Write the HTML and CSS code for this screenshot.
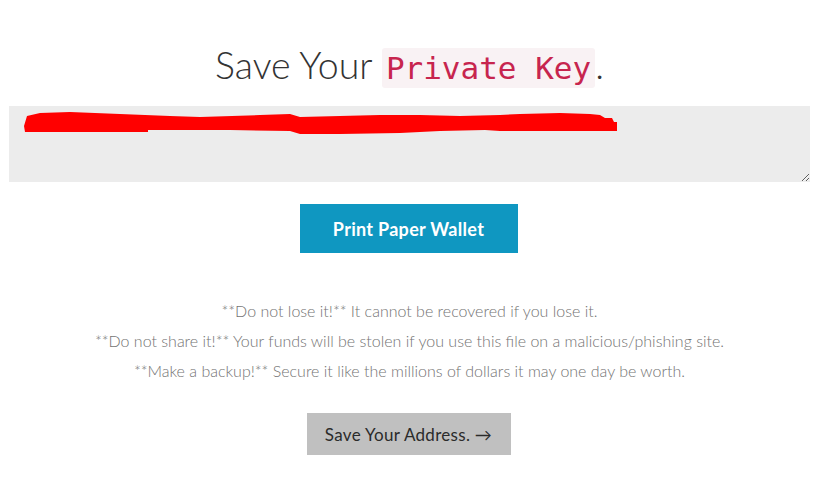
FILE: index.html
```html
<!DOCTYPE html>
<html lang="en">
<head>
<meta charset="utf-8">
<title>Save Your Private Key</title>
<link rel="stylesheet" href="styles.css">
</head>
<body>
<main class="page">
  <h1 class="title">Save Your <code class="key">Private Key</code>.</h1>
  <div class="key-box">
    <textarea class="key-field" readonly aria-label="Private key"></textarea>
    <svg class="redact" width="801" height="76" viewBox="0 0 801 76" aria-hidden="true">
      <path fill="#ff0000" d="M18 10 L31 7 L61 6 L111 8 L161 10 L191 11 L251 9 L281 8 L291 11 L331 10 L371 9 L411 9 L451 10 L491 9 L511 8 L551 7 L581 8 L591 9 L596 12 L603 12 L605 16 L608 16 L608 25 L491 25 L476 24 L431 25 L391 27 L331 28 L291 28 L281 25 L221 24 L191 24 L139 24 L139 26 L16 26 L15 20 Z"/>
    </svg>
  </div>
  <div class="actions actions-print">
    <button class="btn btn-print" type="button">Print Paper Wallet</button>
  </div>
  <div class="notes">
    <p>**Do not lose it!** It cannot be recovered if you lose it.</p>
    <p>**Do not share it!** Your funds will be stolen if you use this file on a malicious/phishing site.</p>
    <p>**Make a backup!** Secure it like the millions of dollars it may one day be worth.</p>
  </div>
  <div class="actions actions-next">
    <button class="btn btn-next" type="button">Save Your Address. &rarr;</button>
  </div>
</main>
</body>
</html>
```
FILE: styles.css
```css
html, body {
  margin: 0;
  padding: 0;
  background: #ffffff;
}

body {
  font-family: Lato, "Open Sans", sans-serif;
  color: #333333;
}

.page {
  width: 801px;
  margin-left: 9px;
  padding-top: 41px;
  display: flex;
  flex-direction: column;
}

.title {
  margin: 0;
  text-align: center;
  font-size: 37.5px;
  font-weight: 300;
  line-height: 48px;
  color: #333333;
}

.key {
  font-family: "DejaVu Sans Mono", "Liberation Mono", monospace;
  font-size: 31px;
  font-weight: 400;
  color: #c7254e;
  background: #f9f2f4;
  padding: 2px 4px;
  border-radius: 3px;
}

.key-box {
  position: relative;
  margin-top: 14px;
  height: 76px;
}

.key-field {
  display: block;
  box-sizing: border-box;
  width: 801px;
  height: 76px;
  margin: 0;
  border: none;
  background: #ececec;
  outline: none;
}

.redact {
  position: absolute;
  left: 0;
  top: 0;
  pointer-events: none;
}

.actions {
  display: flex;
  justify-content: center;
  padding-right: 2px;
}

.actions-print {
  margin-top: 22px;
}

.btn {
  border: none;
  border-radius: 0;
  font-family: Lato, "Open Sans", sans-serif;
  cursor: pointer;
}

.btn-print {
  width: 218px;
  height: 49px;
  background: #0f97c1;
  color: #ffffff;
  font-size: 18px;
  font-weight: 700;
  letter-spacing: 0.3px;
}

.notes {
  margin-top: 48px;
  display: flex;
  flex-direction: column;
  gap: 10px;
  text-align: center;
}

.notes p {
  margin: 0;
  font-size: 16px;
  font-weight: 300;
  line-height: 20px;
  color: #737373;
}

.actions-next {
  margin-top: 32px;
}

.btn-next {
  width: 204px;
  height: 42px;
  background: #c0c0c0;
  color: #2b2b2b;
  font-size: 17px;
  font-weight: 400;
  letter-spacing: 0.3px;
}
```
